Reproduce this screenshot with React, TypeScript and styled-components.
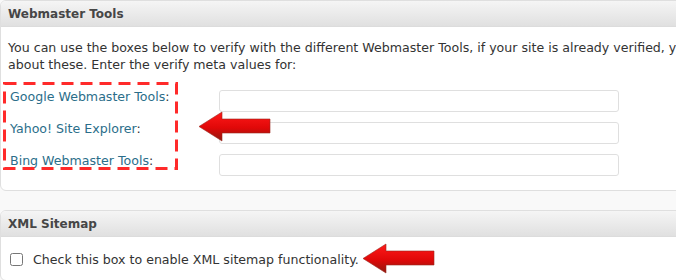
import { Fragment } from 'react';
import styled, { createGlobalStyle } from 'styled-components';

const GlobalStyle = createGlobalStyle`
  body {
    margin: 0;
    background: #f9f9f9;
    overflow: hidden;
    font-family: 'DejaVu Sans', Verdana, sans-serif;
  }
`;

const Page = styled.div`
  position: relative;
  width: 676px;
  height: 280px;
  overflow: hidden;
`;

const Postbox = styled.div<{ $gap?: number }>`
  width: 760px;
  margin-top: ${(p) => p.$gap ?? 0}px;
  background: #fff;
  border: 1px solid #dfdfdf;
  border-radius: 6px;
  overflow: hidden;
`;

const BoxTitle = styled.h3`
  margin: 0;
  height: 25px;
  padding-left: 7px;
  display: flex;
  align-items: center;
  font-size: 12px;
  font-weight: bold;
  color: #464646;
  background: linear-gradient(to bottom, #f5f5f5, #e0e0e0);
  border-bottom: 1px solid #dcdcdc;
`;

const Inside = styled.div`
  padding: 12px 8px 14px 7px;
`;

const Intro = styled.p`
  margin: 0;
  white-space: nowrap;
  font-size: 12.6px;
  line-height: 17px;
  color: #333;
`;

const FormGrid = styled.div`
  margin-top: 17px;
  display: grid;
  grid-template-columns: 211px 400px;
  grid-auto-rows: 22px;
  row-gap: 10px;
  align-items: start;
`;

const Label = styled.label`
  padding-left: 2px;
  font-size: 12.6px;
  line-height: 14px;
  color: #333;
`;

const LabelLink = styled.span`
  color: #2b6e8a;
`;

const TextInput = styled.input`
  box-sizing: border-box;
  width: 400px;
  height: 22px;
  border: 1px solid #dfdfdf;
  border-radius: 3px;
  background: #fff;
`;

const CheckRow = styled.div`
  padding: 15px 8px 13px 9px;
  display: flex;
  align-items: center;
  gap: 10px;
  font-size: 12.6px;
  color: #333;
`;

const Checkbox = styled.input`
  margin: 0;
  width: 13px;
  height: 13px;
`;

const DashedFrame = styled.svg`
  position: absolute;
  left: 2px;
  top: 81px;
`;

const Arrow = styled.svg<{ $x: number; $y: number }>`
  position: absolute;
  left: ${(p) => p.$x}px;
  top: ${(p) => p.$y}px;
  overflow: visible;
`;

const labels = ['Google Webmaster Tools', 'Yahoo! Site Explorer', 'Bing Webmaster Tools'];

const RedArrow = ({ x, y, id }: { x: number; y: number; id: string }) => (
  <Arrow $x={x} $y={y} width="72" height="30" viewBox="0 0 72 30">
    <defs>
      <linearGradient id={id} x1="0" y1="0" x2="0" y2="1">
        <stop offset="0" stopColor="#ff1a1a" />
        <stop offset="0.55" stopColor="#e00808" />
        <stop offset="1" stopColor="#8e1a10" />
      </linearGradient>
    </defs>
    <polygon
      points="0,14.5 23,0 23,7 71,7 71,21 23,21 23,29"
      fill={`url(#${id})`}
      stroke="#9a2a20"
      strokeWidth="0.6"
    />
  </Arrow>
);

const App = () => {
  return (
    <Page>
      <GlobalStyle />
      <Postbox>
        <BoxTitle>Webmaster Tools</BoxTitle>
        <Inside>
          <Intro>
            You can use the boxes below to verify with the different Webmaster Tools, if your site is already verified, you can just forget
            <br />
            about these. Enter the verify meta values for:
          </Intro>
          <FormGrid>
            {labels.map((l) => (
              <Fragment key={l}>
                <Label>
                  <LabelLink>{l}</LabelLink>:
                </Label>
                <TextInput type="text" />
              </Fragment>
            ))}
          </FormGrid>
        </Inside>
      </Postbox>
      <Postbox $gap={19}>
        <BoxTitle>XML Sitemap</BoxTitle>
        <CheckRow>
          <Checkbox type="checkbox" />
          Check this box to enable XML sitemap functionality.
        </CheckRow>
      </Postbox>

      <DashedFrame width="178" height="92" viewBox="0 0 178 92">
        <rect
          x="2.5"
          y="2.5"
          width="172"
          height="85"
          fill="none"
          stroke="#ff2a2a"
          strokeWidth="3"
          strokeDasharray="12 7"
        />
      </DashedFrame>
      <RedArrow x={199} y={112} id="arrowA" />
      <RedArrow x={363} y={244} id="arrowB" />
    </Page>
  );
};

export default App;
